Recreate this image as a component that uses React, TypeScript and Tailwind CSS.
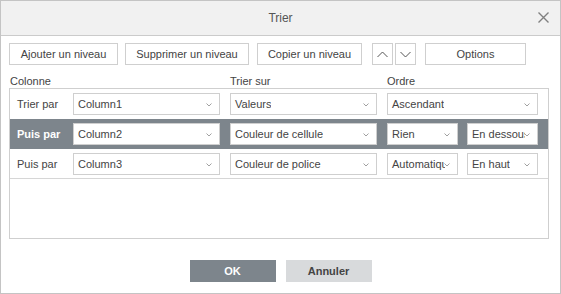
import React from "react";

const font = { fontFamily: '"Liberation Sans", Arial, sans-serif' };

function Chevron({ className = "" }: { className?: string }) {
  return (
    <svg width="6" height="4" viewBox="0 0 6 4" className={className}>
      <polyline points="0.5,0.5 3,3 5.5,0.5" fill="none" stroke="#a0a0a0" strokeWidth="1" />
    </svg>
  );
}

function Select({ value, w }: { value: string; w: string }) {
  return (
    <div
      className={`relative flex h-[22px] shrink-0 items-center border border-[#cfcfcf] bg-white ${w}`}
    >
      <div className="mr-[12px] overflow-hidden whitespace-nowrap pl-[4px] text-[11px] text-[#444]">
        {value}
      </div>
      <Chevron className="absolute right-[7px] top-[9px]" />
    </div>
  );
}

function Btn({ children, w, className = "" }: { children: React.ReactNode; w: string; className?: string }) {
  return (
    <div
      className={`flex h-[22px] shrink-0 items-center justify-center border border-[#cfcfcf] bg-white text-[11px] text-[#444] ${w} ${className}`}
    >
      {children}
    </div>
  );
}

type Row = { label: string; col: string; on: string; order: string; extra?: string; selected?: boolean };

const rows: Row[] = [
  { label: "Trier par", col: "Column1", on: "Valeurs", order: "Ascendant" },
  { label: "Puis par", col: "Column2", on: "Couleur de cellule", order: "Rien", extra: "En dessous", selected: true },
  { label: "Puis par", col: "Column3", on: "Couleur de police", order: "Automatique", extra: "En haut" },
];

export default function App() {
  return (
    <div style={font} className="flex h-[294px] w-[561px] flex-col border border-[#c4c4c4] bg-white">
      <div className="relative flex h-[35px] shrink-0 items-center justify-center border-b border-[#cbcbcb] bg-[#f1f1f1]">
        <span className="text-[12px] text-[#555]">Trier</span>
        <svg width="11" height="11" viewBox="0 0 11 11" className="absolute right-[11px] top-[11px]">
          <path d="M0.5 0.5 L10.5 10.5 M10.5 0.5 L0.5 10.5" stroke="#808080" strokeWidth="1.4" />
        </svg>
      </div>

      <div className="ml-[8px] w-[540px]">
        <div className="mt-[7px] flex">
          <Btn w="w-[109px]">Ajouter un niveau</Btn>
          <Btn w="w-[124px]" className="ml-[7px]">Supprimer un niveau</Btn>
          <Btn w="w-[105px]" className="ml-[8px]">Copier un niveau</Btn>
          <Btn w="w-[21px]" className="ml-[10px]">
            <svg width="11" height="7" viewBox="0 0 11 7">
              <polyline points="0.5,6 5.5,1 10.5,6" fill="none" stroke="#555" strokeWidth="1" />
            </svg>
          </Btn>
          <Btn w="w-[21px]" className="ml-[2px]">
            <svg width="11" height="7" viewBox="0 0 11 7">
              <polyline points="0.5,1 5.5,6 10.5,1" fill="none" stroke="#555" strokeWidth="1" />
            </svg>
          </Btn>
          <Btn w="w-[101px]" className="ml-[9px]">Options</Btn>
        </div>

        <div className="mt-[9px] flex h-[14px] items-center pl-[1px] text-[11px] text-[#444]">
          <div className="w-[220px]">Colonne</div>
          <div className="w-[157px]">Trier sur</div>
          <div>Ordre</div>
        </div>

        <div className="h-[151px] border border-[#cfcfcf]">
          {rows.map((r, i) => (
            <div
              key={i}
              className={`flex h-[30px] items-start pt-[4px] ${r.selected ? "bg-[#7d858c]" : ""} ${
                i === rows.length - 1 ? "border-b border-[#d6d6d6]" : ""
              }`}
            >
              <div
                className={`flex h-[22px] w-[63px] shrink-0 items-center pl-[7px] text-[11px] ${
                  r.selected ? "font-bold text-white" : "text-[#444]"
                }`}
              >
                {r.label}
              </div>
              <Select value={r.col} w="w-[147px]" />
              <div className="w-[10px] shrink-0" />
              <Select value={r.on} w="w-[147px]" />
              <div className="w-[10px] shrink-0" />
              {r.extra ? (
                <>
                  <Select value={r.order} w="w-[71px]" />
                  <div className="w-[9px] shrink-0" />
                  <Select value={r.extra} w="w-[71px]" />
                </>
              ) : (
                <Select value={r.order} w="w-[151px]" />
              )}
            </div>
          ))}
        </div>
      </div>

      <div className="mt-[21px] flex justify-center gap-[10px]">
        <div className="flex h-[22px] w-[86px] items-center justify-center bg-[#7d858c] text-[11px] font-bold text-white">
          OK
        </div>
        <div className="flex h-[22px] w-[86px] items-center justify-center bg-[#d8dadc] text-[11px] font-bold text-[#444]">
          Annuler
        </div>
      </div>
    </div>
  );
}
